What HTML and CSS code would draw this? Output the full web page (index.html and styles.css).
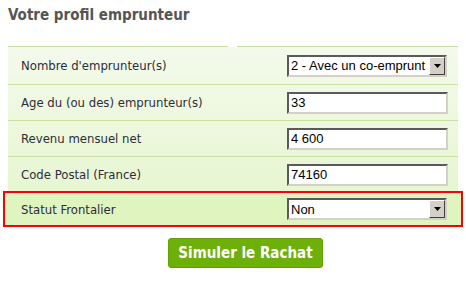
FILE: index.html
```html
<!DOCTYPE html>
<html lang="fr">
<head>
<meta charset="utf-8">
<link rel="stylesheet" href="styles.css">
</head>
<body>
<h2 class="title">Votre profil emprunteur</h2>
<div class="form">
  <div class="topline"><span class="seg seg-left"></span><span class="seg seg-right"></span></div>
  <div class="row row-first">
    <span class="label">Nombre d'emprunteur(s)</span>
    <span class="field select"><span class="value">2 - Avec un co-emprunt</span><span class="drop"><svg width="7" height="4" viewBox="0 0 7 4"><path d="M0 0H7L3.5 4Z" fill="#000"/></svg></span></span>
  </div>
  <div class="row">
    <span class="label">Age du (ou des) emprunteur(s)</span>
    <span class="field input"><span class="value">33</span></span>
  </div>
  <div class="row">
    <span class="label">Revenu mensuel net</span>
    <span class="field input"><span class="value">4 600</span></span>
  </div>
  <div class="row">
    <span class="label">Code Postal (France)</span>
    <span class="field input"><span class="value">74160</span></span>
  </div>
  <div class="row row-last">
    <span class="label">Statut Frontalier</span>
    <span class="field select"><span class="value">Non</span><span class="drop"><svg width="7" height="4" viewBox="0 0 7 4"><path d="M0 0H7L3.5 4Z" fill="#000"/></svg></span></span>
  </div>
</div>
<div class="actions"><button class="btn">Simuler le Rachat</button></div>
</body>
</html>
```
FILE: styles.css
```css
html, body { margin: 0; padding: 0; background: #fff; }
body { font-family: "DejaVu Sans Condensed", "DejaVu Sans", sans-serif; width: 466px; height: 283px; overflow: hidden; }
.title { margin: 0; padding: 6px 8px 0; height: 46px; box-sizing: border-box; font-size: 15px; font-weight: bold; color: #555; }
.form { margin: 0 8px; width: 450px; background: linear-gradient(#f4faec, #e4f5cb); }
.topline { display: flex; height: 1px; background: #fff; }
.seg { display: block; height: 1px; background: #c6dea0; }
.seg-left { width: 220px; }
.seg-right { margin-left: 9px; width: 221px; }
.row { display: flex; align-items: center; height: 35px; border-bottom: 1px solid #c9e0a3; }
.row-first { height: 37px; }
.label { width: 266px; padding-left: 13px; font-size: 13px; color: #2d2d3a; }
.row-last { height: 32px; border: 2px solid #f00; margin: -2px -5px 0; padding-left: 3px; background: #e0f4c0; }
.field { box-sizing: border-box; height: 22px; width: 161px; background: #fff; border: 2px solid; border-color: #5a5a5a #d4d0c8 #d4d0c8 #5a5a5a; display: flex; align-items: center; font-family: "Liberation Sans", Arial, sans-serif; font-size: 13px; color: #000; }
.select { width: 160px; }
.value { flex: 1; padding-left: 2px; white-space: nowrap; overflow: hidden; }
.drop { width: 16px; height: 18px; box-sizing: border-box; background: #d4d0c8; border: 1px solid; border-color: #fff #404040 #404040 #fff; display: flex; align-items: center; justify-content: center; }
.actions { padding-top: 11px; padding-left: 168px; }
.btn { width: 155px; height: 30px; border: 1px solid #64a000; border-radius: 3px; background: #6eb00a; color: #fff; font-family: "DejaVu Sans Condensed", "DejaVu Sans", sans-serif; font-weight: bold; font-size: 15px; padding: 0; }
```
